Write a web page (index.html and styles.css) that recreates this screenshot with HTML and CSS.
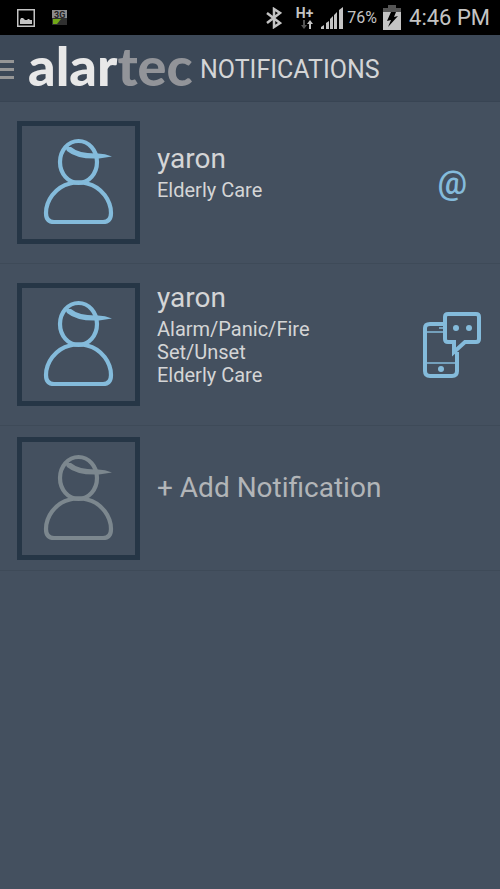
FILE: index.html
```html
<!DOCTYPE html>
<html lang="en">
<head>
<meta charset="utf-8">
<meta name="viewport" content="width=device-width, initial-scale=1">
<title>Notifications</title>
<link rel="stylesheet" href="styles.css">
</head>
<body>
<svg class="symbols" aria-hidden="true">
  <symbol id="person" viewBox="0 0 72 88">
    <g fill="none" stroke="currentColor" stroke-width="4.200">
      <ellipse cx="35.500" cy="24" rx="18.500" ry="21"/>
      <path d="M27 45.500C12 49 3 63 3 75Q3 84 11 84H60Q68 84 68 75C68 63 59 49 44 45.500Q35.500 43 27 45.500Z"/>
    </g>
    <path fill="currentColor" d="M22 9L28 9Q36 16 55 15.500Q62 15.500 69 18.500L56 20.500Q34 21.500 24 13Z"/>
  </symbol>
</svg>
<div class="status">
  <svg class="status-picture" width="18" height="18" viewBox="0 0 18 18" aria-hidden="true"><path fill="none" stroke="#c4c4c4" stroke-width="1.500" d="M.75.75H17.250V17.250H.75Z"/><path fill="#c4c4c4" d="M3 15V11L4 9H6L8 11H10L11 10H12L13 11H15V15Z"/></svg>
  <svg class="status-network" width="15" height="15" viewBox="0 0 15 15" aria-hidden="true"><path fill="#8c8c8c" d="M0 0H15V8H0Z"/><path fill="#303030" d="M0 8H15V15H0Z"/><path fill="#72a818" d="M1 9H9L5 14H1Z"/><text x="2" y="8" class="network-label">3G</text></svg>
  <svg class="status-bluetooth" width="16" height="22" viewBox="0 0 16 22" aria-hidden="true"><path fill="none" stroke="#c4c4c4" stroke-width="2.500" d="M1 6L14 16L8 20V2L14 6L1 16"/></svg>
  <span class="data"><b>H+</b><svg width="12" height="9" viewBox="0 0 12 9" aria-hidden="true"><path fill="#555" d="M2 0H4V5H6L3 9L0 5H2Z"/><path fill="#c4c4c4" d="M8 9H10V4H12L9 0L6 4H8Z"/></svg></span>
  <svg class="status-signal" width="22" height="22" viewBox="0 0 22 22" aria-hidden="true"><path fill="#c4c4c4" d="M0 22V20L3 18V22ZM5 22V16L8 14V22ZM9 22V12L12 9V22ZM13 22V8L16 5V22ZM18 22V3L22 0V22Z"/></svg>
  <span class="percent">76%</span>
  <svg class="status-battery" width="18" height="25" viewBox="0 0 18 25" aria-hidden="true"><path fill="#555" d="M5 0H13V3H18V7H0V3H5Z"/><path fill="#c4c4c4" d="M0 7H18V25H0Z"/><path fill="#000" d="M8 7H13L11 12L15 11L5 22L8 15L4 16Z"/></svg>
  <time>4:46 PM</time>
</div>
<header class="topbar">
  <button class="menu" type="button" aria-label="Menu"><span></span><span></span><span></span></button>
  <span class="brand">alar<span class="brand-tail">tec</span></span>
  <h1>NOTIFICATIONS</h1>
</header>
<main>
  <ul class="list">
    <li class="row">
      <span class="avatar"><svg aria-hidden="true"><use href="#person"/></svg></span>
      <div class="details"><h2>yaron</h2><p>Elderly Care</p></div>
      <span class="channel at">@</span>
    </li>
    <li class="row">
      <span class="avatar"><svg aria-hidden="true"><use href="#person"/></svg></span>
      <div class="details"><h2>yaron</h2><p>Alarm/Panic/Fire</p><p>Set/Unset</p><p>Elderly Care</p></div>
      <svg class="channel" width="58" height="66" viewBox="0 0 58 66" role="img" aria-label="Text message">
        <g fill="none" stroke="#84bbdb" stroke-width="4">
          <path d="M21 12H7Q2 12 2 16V59Q2 64 7 64H29Q34 64 34 59V40"/>
          <path d="M25 2H53Q56 2 56 5V27Q56 30 53 30H42L31 40V30H25Q22 30 22 27V5Q22 2 25 2Z"/>
        </g>
        <path stroke="#84bbdb" stroke-width="1.500" d="M2 20H21M2 51H34M16 16H21"/>
        <g fill="#84bbdb"><circle cx="33" cy="16" r="3"/><circle cx="46" cy="16" r="3"/><circle cx="18" cy="57" r="3"/></g>
      </svg>
    </li>
    <li>
      <button class="row add" type="button">
        <span class="avatar"><svg aria-hidden="true"><use href="#person"/></svg></span>
        <span class="details">+ Add Notification</span>
      </button>
    </li>
  </ul>
</main>
</body>
</html>
```
FILE: styles.css
```css
* { box-sizing: border-box; }
body {
  margin: 0;
  min-height: 100vh;
  background: #44505f;
  color: #d4d5d6;
  font-family: Roboto, "Liberation Sans", sans-serif;
}
h1, h2, p, ul { margin: 0; padding: 0; font-weight: 400; }
button { border: 0; background: none; color: inherit; font: inherit; }
.symbols { display: none; }
.status {
  display: flex;
  align-items: center;
  height: 35px;
  padding: 0 10px 0 17px;
  background: #000;
  color: #c4c4c4;
}
.status-network { margin-left: 17px; }
.network-label { font: bold 9px Roboto, sans-serif; fill: #222; }
.status-bluetooth { margin-left: auto; }
.data {
  display: flex;
  flex-direction: column;
  align-items: center;
  margin-left: 14px;
  font-size: 14px;
  line-height: 14px;
}
.data svg { margin-left: 4px; }
.status-signal { margin-left: 8px; }
.percent { margin-left: 4px; font-size: 16px; }
.status-battery { margin: 0 8px 0 6px; }
.status time { font-size: 22px; }
.topbar {
  display: flex;
  align-items: center;
  height: 67px;
  padding-top: 2px;
  background: #3c4857;
  border-bottom: 1px solid #384453;
}
.menu {
  display: flex;
  flex-direction: column;
  gap: 5px;
  width: 14px;
  padding: 0;
}
.menu span { height: 3px; background: #969696; }
.brand {
  width: 172px;
  margin-left: 14px;
  color: #e8e8e8;
  font-family: Lato, sans-serif;
  font-size: 54px;
  font-weight: 900;
  line-height: 54px;
  padding-bottom: 6px;
}
.brand-tail { color: #929499; }
.topbar h1 { font-size: 25px; }
.list { list-style: none; }
.row {
  display: flex;
  align-items: center;
  gap: 17px;
  width: 100%;
  min-height: 162px;
  padding: 0 19px 0 17px;
  border-bottom: 1px solid #3e4a58;
  text-align: left;
}
.avatar {
  display: flex;
  justify-content: center;
  flex: none;
  width: 123px;
  height: 123px;
  padding-top: 12px;
  border: 5px solid #263646;
  color: #84bbdb;
}
.avatar svg { width: 72px; height: 88px; }
.details { flex: 1; padding-bottom: 22px; }
.details h2 { margin-bottom: 4px; font-size: 28px; line-height: 33px; }
.details p { font-size: 20px; line-height: 23px; }
.channel { flex: none; }
.at {
  padding-right: 14px;
  color: #84bbdb;
  font-size: 33px;
  font-weight: 500;
  line-height: 40px;
}
.add {
  min-height: 145px;
  color: #b2b5b8;
  font-size: 28px;
  line-height: 33px;
}
.add .avatar { color: #7c878e; }
```
